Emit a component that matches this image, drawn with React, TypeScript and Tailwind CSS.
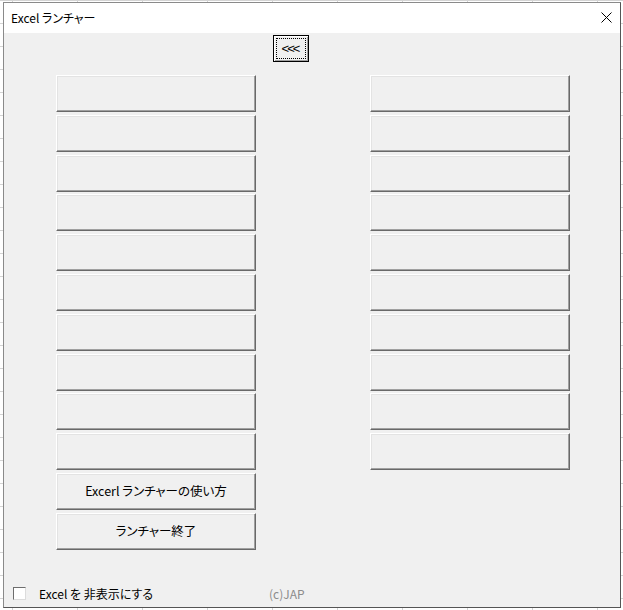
import React from 'react';

const FONT = { fontFamily: '"Noto Sans CJK JP", "Noto Sans", sans-serif' };

// classic raised 3D button face
function FormButton({ label = '' }: { label?: string }) {
  return (
    <button
      className="h-[37px] w-[200px] bg-[#f0f0f0] border-t border-l border-t-white border-l-white border-b border-r border-b-[#696969] border-r-[#696969] shadow-[inset_-1px_-1px_0_#a0a0a0,inset_1px_1px_0_#e3e3e3] text-[12.5px] text-black flex items-center justify-center [font-feature-settings:'palt']"
      style={FONT}
    >
      {label}
    </button>
  );
}

export default function App() {
  const left = ['', '', '', '', '', '', '', '', '', '', 'Excerl ランチャーの使い方', 'ランチャー終了'];
  const right = Array.from({ length: 10 }, () => '');

  return (
    <div
      className="w-[623px] h-[610px] pt-[2px] pl-[3px] bg-white bg-[linear-gradient(to_right,#d4d4d4_1px,transparent_1px),linear-gradient(to_bottom,#d4d4d4_1px,transparent_1px)] bg-[size:65px_23px] bg-[position:12px_0px] [font-feature-settings:'palt']"
      style={FONT}
    >
      <div className="w-[618px] h-[606px] flex flex-col border border-[#8a8a8a] border-r-[#555] border-b-[#555] bg-[#f0f0f0]">
        {/* Title bar */}
        <div className="h-[30px] bg-white flex items-center justify-between pl-[7px] pr-[8px]">
          <span className="text-[12px] text-black leading-none">Excel ランチャー</span>
          <svg width="11" height="11" viewBox="0 0 11 11" className="mb-[1px]">
            <path d="M0.5 0.5 L10.5 10.5 M10.5 0.5 L0.5 10.5" stroke="#000" strokeWidth="1" />
          </svg>
        </div>

        {/* Body */}
        <div className="flex-1 flex flex-col">
          <div className="mt-[2px] ml-[269px] flex h-[27px]">
            <button className="w-[36px] h-[27px] border border-black bg-[#f0f0f0] shadow-[inset_1px_1px_0_#fff,inset_-1px_-1px_0_#a0a0a0] p-[2px]">
              <div
                className="w-full h-full border border-dotted border-black flex items-center justify-center text-[13px] leading-none text-black tracking-[-2px] pr-[2px]"
                style={{ fontFamily: '"Liberation Sans", Arial, sans-serif' }}
              >
                &lt;&lt;&lt;
              </div>
            </button>
          </div>

          <div className="mt-[13px] pl-[52px] flex gap-[114px]">
            <div className="flex flex-col gap-[2.8px]">
              {left.map((l, i) => (
                <FormButton key={i} label={l} />
              ))}
            </div>
            <div className="flex flex-col gap-[2.8px]">
              {right.map((l, i) => (
                <FormButton key={i} label={l} />
              ))}
            </div>
          </div>

          {/* Bottom row */}
          <div className="mt-auto pb-[7px] pl-[9px] flex items-center">
            <div className="w-[13px] h-[13px] bg-white border-t border-l border-[#6d6d6d] border-b border-r border-b-[#dcdcdc] border-r-[#dcdcdc]" />
            <span className="ml-[13px] w-[230px] text-[12px] text-black leading-none">Excel を 非表示にする</span>
            <span className="text-[12px] text-[#8c8c8c] leading-none">(c)JAP</span>
          </div>
        </div>
      </div>
    </div>
  );
}
